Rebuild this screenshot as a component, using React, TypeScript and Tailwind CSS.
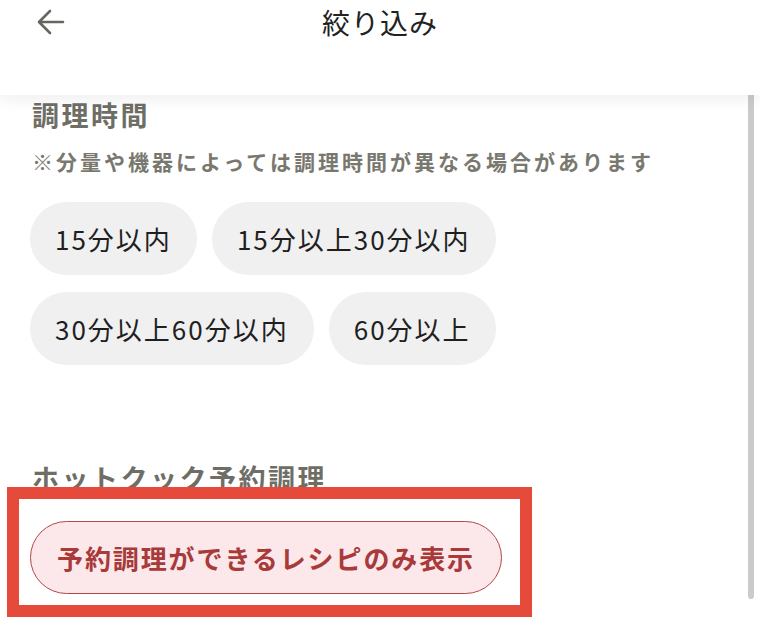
import React from 'react';

const timeOptions = [
  ['15分以内', '15分以上30分以内'],
  ['30分以上60分以内', '60分以上'],
];

const Chip: React.FC<{ label: string }> = ({ label }) => (
  <button className="h-[73px] px-[25px] rounded-full bg-[#f0f0f0] text-[26px] tracking-[2px] text-[#1f1f1f] leading-none">
    {label}
  </button>
);

const App: React.FC = () => {
  return (
    <div
      className="relative w-[760px] h-[644px] overflow-hidden bg-white"
      style={{ fontFamily: '"Noto Sans CJK JP", "Noto Sans", sans-serif' }}
    >
      {/* header */}
      <header className="relative z-10 h-[95px] bg-white shadow-[0_6px_14px_rgba(0,0,0,0.06)]">
        <div className="relative flex h-[44px] items-center justify-center">
          <button className="absolute left-[36px] top-[8px] p-0" aria-label="戻る">
            <svg width="30" height="28" viewBox="0 0 30 28" fill="none">
              <path
                d="M27 14H4M14 3L3 14l11 11"
                stroke="#66665e"
                strokeWidth="2.6"
                strokeLinecap="round"
                strokeLinejoin="round"
              />
            </svg>
          </button>
          <h1 className="text-[28px] tracking-[1px] text-[#222] leading-none">絞り込み</h1>
        </div>
      </header>

      {/* content */}
      <main className="px-[32px] pt-[2px]">
        <section>
          <h2 className="text-[27px] leading-[35px] font-bold tracking-[2.5px] text-[#6e6e66]">調理時間</h2>
          <p className="mt-[14px] text-[21px] leading-[30px] font-bold tracking-[3px] text-[#78786f]">
            ※分量や機器によっては調理時間が異なる場合があります
          </p>
          <div className="mt-[26px] -ml-[2px] flex flex-col gap-[17px]">
            {timeOptions.map((row, i) => (
              <div key={i} className="flex gap-[15px]">
                {row.map((label) => (
                  <Chip key={label} label={label} />
                ))}
              </div>
            ))}
          </div>
        </section>

        <section className="mt-[95px]">
          <h2 className="text-[27px] leading-[35px] font-bold tracking-[2.5px] text-[#6e6e66]">ホットクック予約調理</h2>
          <button className="mt-[26px] -ml-[2px] h-[73px] px-[26px] rounded-full border-[1.5px] border-[#b24848] bg-[#fce8ea] text-[26px] font-bold tracking-[1.9px] text-[#a83a3a] leading-none">
            予約調理ができるレシピのみ表示
          </button>
        </section>
      </main>

      {/* scrollbar */}
      <div className="absolute right-[6px] top-0 h-[599px] w-[6px] rounded-b-full bg-[#cbcbcb]" />

      {/* annotation frame */}
      <div className="absolute left-[7px] top-[487px] h-[130px] w-[525px] border-[12px] border-[#e64a3b]" />
    </div>
  );
};

export default App;
